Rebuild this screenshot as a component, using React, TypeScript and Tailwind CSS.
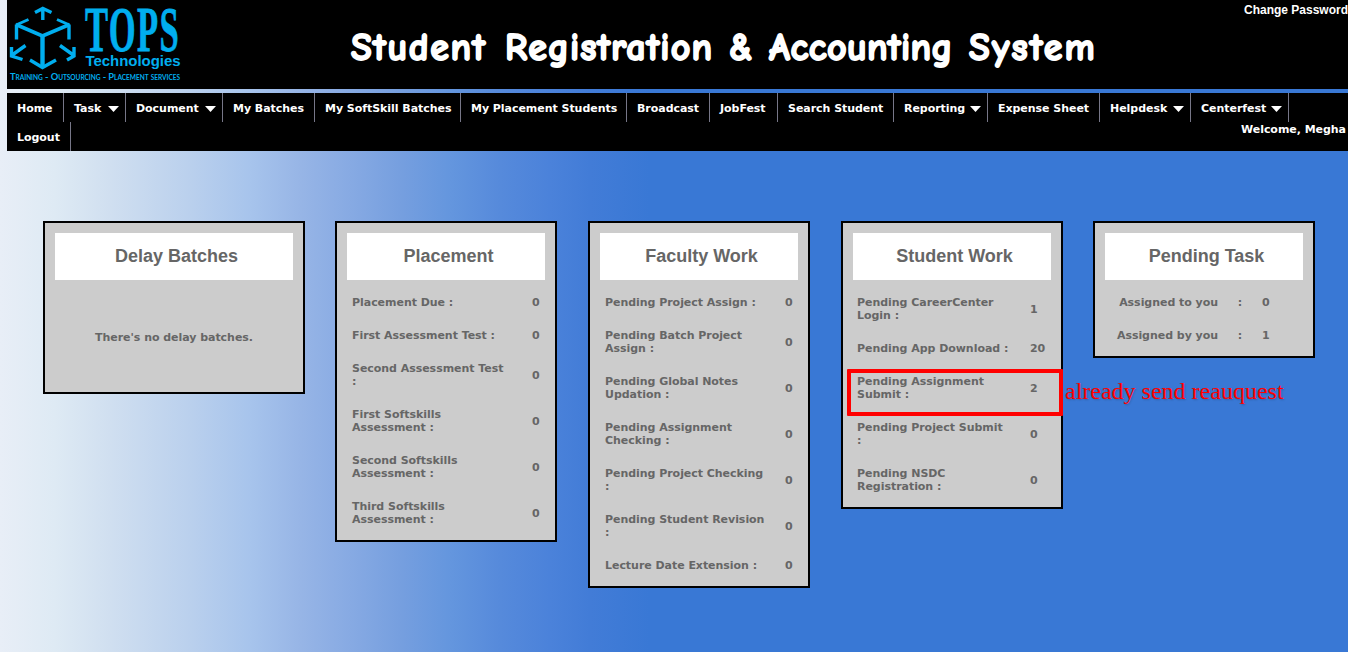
import type { ReactNode } from 'react'

const nav: { label: string; w: string; menu?: boolean }[] = [
  { label: 'Home', w: 'w-[57px]' },
  { label: 'Task', w: 'w-[62px]', menu: true },
  { label: 'Document', w: 'w-[97px]', menu: true },
  { label: 'My Batches', w: 'w-[92px]' },
  { label: 'My SoftSkill Batches', w: 'w-[146px]' },
  { label: 'My Placement Students', w: 'w-[166px]' },
  { label: 'Broadcast', w: 'w-[83px]' },
  { label: 'JobFest', w: 'w-[68px]' },
  { label: 'Search Student', w: 'w-[116px]' },
  { label: 'Reporting', w: 'w-[94px]', menu: true },
  { label: 'Expense Sheet', w: 'w-[112px]' },
  { label: 'Helpdesk', w: 'w-[91px]', menu: true },
  { label: 'Centerfest', w: 'w-[98px]', menu: true },
  { label: 'Logout', w: 'w-[64px]' },
]

type Row = [string[], string]

const placement: Row[] = [
  [['Placement Due :'], '0'],
  [['First Assessment Test :'], '0'],
  [['Second Assessment Test', ':'], '0'],
  [['First Softskills', 'Assessment :'], '0'],
  [['Second Softskills', 'Assessment :'], '0'],
  [['Third Softskills', 'Assessment :'], '0'],
]
const faculty: Row[] = [
  [['Pending Project Assign :'], '0'],
  [['Pending Batch Project', 'Assign :'], '0'],
  [['Pending Global Notes', 'Updation :'], '0'],
  [['Pending Assignment', 'Checking :'], '0'],
  [['Pending Project Checking', ':'], '0'],
  [['Pending Student Revision', ':'], '0'],
  [['Lecture Date Extension :'], '0'],
]
const student: Row[] = [
  [['Pending CareerCenter', 'Login :'], '1'],
  [['Pending App Download :'], '20'],
  [['Pending Assignment', 'Submit :'], '2'],
  [['Pending Project Submit', ':'], '0'],
  [['Pending NSDC', 'Registration :'], '0'],
]

function Logo() {
  return (
    <svg width="180" height="89" viewBox="0 0 180 89" className="block shrink-0" fill="#00aeef">
      <g fill="none" stroke="#00aeef" strokeWidth="3.4">
        <path d="M9.500 39.500V24.500M62 24.500V39.500" />
        <path d="M9 24.500L35.500 36L62.500 24.500" strokeWidth="3.800" />
        <path d="M35.500 36V68" strokeWidth="4.400" />
        <path d="M23 60L35.500 67.500L49 60" />
        <path d="M21.500 19.500L9 25M50 19.500L62.500 25" strokeWidth="3" />
        <path d="M35.800 20V9M28 12.500L35.800 8.500L44.500 12.500" />
        <path d="M18.500 45.500L4.500 55.500M4.500 47V56L15.500 59.500M53 45.500L67 55.500M67 47V56L60 60" />
      </g>
      <text transform="translate(78 51) scale(0.54 1)" fontFamily="Liberation Serif, serif" fontSize="64" letterSpacing="2.500" stroke="#00aeef" strokeWidth="0.800">TOPS</text>
      <text x="78.500" y="65.500" fontFamily="Liberation Sans, sans-serif" fontWeight="700" fontSize="15" textLength="95" lengthAdjust="spacingAndGlyphs">Technologies</text>
      <text x="3" y="80" fontFamily="Lato, sans-serif" fontWeight="700" fontSize="10" textLength="170" lengthAdjust="spacingAndGlyphs" className="[font-variant-caps:small-caps]">Training - Outsourcing - Placement services</text>
    </svg>
  )
}

function Card({ title, width, children }: { title: string; width: string; children: ReactNode }) {
  return (
    <section className={`${width} shrink-0 border-2 border-black bg-[#ccc] pt-[10px] pb-[4px]`}>
      <h2 className="mx-[10px] mb-[6px] flex h-[47px] items-center justify-center bg-white pl-[5px] font-['Liberation_Sans',sans-serif] text-[18px] font-bold tracking-normal">{title}</h2>
      {children}
    </section>
  )
}

function Rows({ rows, indent, labelWidth }: { rows: Row[]; indent: string; labelWidth: string }) {
  return (
    <>
      {rows.map(([lines, value]) => (
        <div key={lines.join(' ')} className={`${indent} flex items-center py-[10px]`}>
          <div className={`${labelWidth} shrink-0`}>
            {lines.map((l) => (
              <div key={l} className="whitespace-nowrap">{l}</div>
            ))}
          </div>
          <span>{value}</span>
        </div>
      ))}
    </>
  )
}

export default function App() {
  return (
    <div className="relative h-[652px] w-[1348px] overflow-hidden bg-[linear-gradient(to_right,#e8eef7_0px,#deeaf4_55px,#d0dff0_110px,#bad0ed_190px,#a7c4ec_250px,#97b5e6_300px,#87aae3_350px,#769fdf_400px,#6496de_450px,#568adb_500px,#4b82da_550px,#427cd7_590px,#3978d5_650px)] pl-[7px] font-['DejaVu_Sans',sans-serif] text-[11px] leading-[13px] font-bold tracking-[-0.04px] text-[#666]">
      <header className="flex h-[89px] bg-black text-white">
        <Logo />
        <h1 className="flex w-[920px] items-center gap-[17px] pt-[6px] pl-[164px] font-['Comic_Sans_MS','Comic_Neue',cursive] text-[38px] leading-[48px] whitespace-nowrap [-webkit-text-stroke:1.8px_white]">
          <span className="w-[137px] tracking-[1.6px]">Student</span>
          <span className="w-[207px] tracking-[1.1px]">Registration</span>
          <span className="w-[23px]">&amp;</span>
          <span className="w-[183px] tracking-[0.4px]">Accounting</span>
          <span className="w-[127px] tracking-[2.2px]">System</span>
        </h1>
        <a className="ml-auto pt-[4px] font-['Liberation_Sans',sans-serif] text-[12px] tracking-normal whitespace-nowrap">Change Password</a>
      </header>
      <nav className="mt-1 flex h-[58px] flex-wrap bg-black text-white">
        {nav.map((n) => (
          <a key={n.label} className={`${n.w} flex h-[29px] items-center justify-between border-r border-[#778] pt-[2px] pr-[6px] pl-[10px] whitespace-nowrap`}>
            {n.label}
            {n.menu && (
              <svg width="11" height="6" viewBox="0 0 11 6" className="mt-[1px] shrink-0" fill="white">
                <path d="M0 0H11L5.500 6Z" />
              </svg>
            )}
          </a>
        ))}
        <span className="ml-auto pt-[1px] pr-[2px]">Welcome, Megha</span>
      </nav>
      <main className="flex items-start pt-[70px] pl-[36px]">
        <Card title="Delay Batches" width="w-[262px]">
          <p className="flex h-[102px] items-center justify-center">There's no delay batches.</p>
        </Card>
        <div className="w-[30px]" />
        <Card title="Placement" width="w-[222px]">
          <Rows rows={placement} indent="pl-[15px]" labelWidth="w-[180px]" />
        </Card>
        <div className="w-[31px]" />
        <Card title="Faculty Work" width="w-[222px]">
          <Rows rows={faculty} indent="pl-[15px]" labelWidth="w-[180px]" />
        </Card>
        <div className="w-[31px]" />
        <Card title="Student Work" width="w-[222px]">
          <Rows rows={student} indent="pl-[14px]" labelWidth="w-[173px]" />
        </Card>
        <div className="w-[30px]" />
        <Card title="Pending Task" width="w-[222px]">
          <div className="flex py-[10px]">
            <span className="w-[123px] text-right">Assigned to you</span>
            <span className="w-[44px] text-center">:</span>
            <span>0</span>
          </div>
          <div className="flex py-[10px]">
            <span className="w-[123px] text-right">Assigned by you</span>
            <span className="w-[44px] text-center">:</span>
            <span>1</span>
          </div>
        </Card>
      </main>
      <div className="absolute top-[369px] left-[847px] h-[47px] w-[216px] rounded-[1px] border-4 border-[#f00]" />
      <div className="absolute top-[378px] left-[1065px] font-['Liberation_Serif',serif] text-[24px] leading-[27px] font-normal tracking-normal whitespace-nowrap text-[#f00] [text-shadow:1px_1px_2px_#0003]">already send reauquest</div>
    </div>
  )
}
